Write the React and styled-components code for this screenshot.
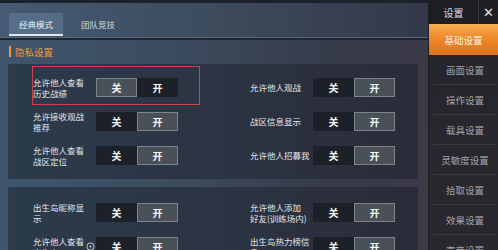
import React from 'react';
import styled, { createGlobalStyle } from 'styled-components';

const GlobalStyle = createGlobalStyle`
  html, body {
    margin: 0;
    padding: 0;
    background: #1e2128;
  }
  body {
    font-family: "Noto Sans CJK SC", "Noto Sans", sans-serif;
  }
`;

const Screen = styled.div`
  width: 498px;
  height: 250px;
  display: flex;
  overflow: hidden;
`;

const Main = styled.div`
  width: 428px;
  flex-shrink: 0;
  display: flex;
  flex-direction: column;
  overflow: hidden;
  background: linear-gradient(90deg, #3f566d 0%, #3b4a5c 45%, #363a49 80%, #3c3a48 100%);
  & > * {
    flex-shrink: 0;
  }
`;

const TopEdge = styled.div`
  height: 3px;
  background: #1c222b;
`;

const TabBar = styled.div`
  height: 34px;
  display: flex;
  align-items: flex-end;
  padding: 0 0 1px 9px;
  gap: 8px;
  box-sizing: border-box;
  background: linear-gradient(90deg, #445b73 0%, #3d4b5d 50%, #33384a 100%);
`;

const Tab = styled.div`
  width: 54px;
  height: 23px;
  display: flex;
  align-items: center;
  justify-content: center;
  box-sizing: border-box;
  font-size: 8.5px;
  color: ${({ active }) => (active ? '#e8edf2' : '#d6dce2')};
  background: ${({ active }) => (active ? 'rgba(120, 150, 180, 0.35)' : 'transparent')};
  border-bottom: 2px solid ${({ active }) => (active ? '#dfe6ee' : 'transparent')};
`;

const Divider = styled.div`
  height: 3px;
  background: linear-gradient(180deg, #56677a 0%, #56677a 40%, #1f2631 40%, #1f2631 100%);
`;

const SectionTitle = styled.div`
  display: flex;
  align-items: center;
  gap: 4px;
  height: 13px;
  margin: 5px 0 6px 9px;
  font-size: 9.5px;
  color: #ec9a36;
  &::before {
    content: '';
    width: 2px;
    height: 11px;
    background: #ec9a36;
  }
`;

const Panels = styled.div`
  display: flex;
  flex-direction: column;
  gap: 8px;
  margin-left: 8px;
  width: 410px;
  & > * {
    flex-shrink: 0;
  }
`;

const Panel = styled.div`
  padding: ${({ top }) => top}px 0 14px 25px;
  display: grid;
  grid-template-columns: 217px 217px;
  row-gap: 15px;
  background: linear-gradient(90deg, #2b3b4c 0%, #2c3443 50%, #2b2b38 100%);
`;

const Cell = styled.div`
  position: relative;
  display: flex;
  align-items: center;
  height: 19px;
`;

const Label = styled.div`
  width: 63px;
  flex-shrink: 0;
  font-size: 8.5px;
  line-height: 10.5px;
  color: #e2e6ea;
  display: flex;
  align-items: center;
`;

const HelpIcon = styled.svg`
  margin-left: 2px;
  flex-shrink: 0;
`;

const Toggle = styled.div`
  display: flex;
  width: 82px;
  height: 19px;
`;

const Half = styled.div`
  flex: 1;
  display: flex;
  align-items: center;
  justify-content: center;
  box-sizing: border-box;
  font-size: 10px;
  font-weight: 700;
  color: #f2f4f6;
  background: ${({ on }) => (on ? '#4a5058' : '#1c2129')};
  border: 1px solid ${({ on }) => (on ? '#7c838c' : '#1c2129')};
`;

const Highlight = styled.div`
  position: absolute;
  left: -1px;
  top: -12px;
  width: 168px;
  height: 39px;
  box-sizing: border-box;
  border: 1.5px solid #c9424e;
  pointer-events: none;
`;

const Sidebar = styled.div`
  width: 70px;
  flex-shrink: 0;
  display: flex;
  flex-direction: column;
  overflow: hidden;
  background: linear-gradient(180deg, #24252b 0%, #2a282f 100%);
  border-left: 1px solid #1d1e22;
  box-sizing: border-box;
  & > * {
    flex-shrink: 0;
  }
`;

const SideHeader = styled.div`
  height: 24px;
  display: flex;
  background: #1c1e22;
`;

const HeaderTitle = styled.div`
  width: 49px;
  display: flex;
  align-items: center;
  justify-content: center;
  font-size: 10px;
  color: #dcdde0;
  border-right: 1px solid #34363b;
`;

const Close = styled.div`
  flex: 1;
  display: flex;
  align-items: center;
  justify-content: center;
  font-size: 13px;
  color: #e4e5e8;
  font-family: "DejaVu Sans", sans-serif;
`;

const SideItem = styled.div`
  height: ${({ active }) => (active ? 31 : 30)}px;
  display: flex;
  align-items: center;
  justify-content: center;
  font-size: 9.5px;
  box-sizing: border-box;
  color: ${({ active }) => (active ? '#fff1e4' : '#a2a2a8')};
  background: ${({ active }) =>
    active ? 'linear-gradient(180deg, #f7ad52 0%, #ee8a2a 45%, #dc7218 100%)' : 'transparent'};
  margin: ${({ active }) => (active ? '0' : '0 1px 0 4px')};
  border-bottom: ${({ active }) => (active ? 'none' : '1px solid #3a3a41')};
`;

const rows1 = [
  [{ label: ['允许他人查看', '历史战绩'], on: 0, mark: true }, { label: ['允许他人观战'], on: 1 }],
  [{ label: ['允许接收观战', '推荐'], on: 1 }, { label: ['战区信息显示'], on: 1 }],
  [{ label: ['允许他人查看', '战区定位'], on: 1 }, { label: ['允许他人招募我'], on: 1 }],
];

const rows2 = [
  [{ label: ['出生岛昵称显', '示'], on: 1 }, { label: ['允许他人添加', '好友(训练场内)'], on: 1 }],
  [{ label: ['允许他人查看', '出生岛'], on: 1, help: true }, { label: ['出生岛热力榜信', '息'], on: 1 }],
];

const menu = ['基础设置', '画面设置', '操作设置', '载具设置', '灵敏度设置', '拾取设置', '效果设置', '声音设置'];

const SwitchCell = ({ item }) => (
  <Cell>
    <Label>
      <span>
        {item.label.map((line, i) => (
          <React.Fragment key={i}>
            {i > 0 && <br />}
            {line}
          </React.Fragment>
        ))}
      </span>
      {item.help && (
        <HelpIcon width="9" height="9" viewBox="0 0 9 9">
          <circle cx="4.5" cy="4.5" r="3.6" fill="none" stroke="#c8ccd2" strokeWidth="1" />
          <circle cx="4.5" cy="4.5" r="1" fill="#c8ccd2" />
        </HelpIcon>
      )}
    </Label>
    <Toggle>
      <Half on={item.on === 0}>关</Half>
      <Half on={item.on === 1}>开</Half>
    </Toggle>
    {item.mark && <Highlight />}
  </Cell>
);

export default function App() {
  return (
    <>
      <GlobalStyle />
      <Screen>
        <Main>
          <TopEdge />
          <TabBar>
            <Tab active>经典模式</Tab>
            <Tab>团队竞技</Tab>
          </TabBar>
          <Divider />
          <SectionTitle>隐私设置</SectionTitle>
          <Panels>
            <Panel top={14}>
              {rows1.flat().map((item, i) => (
                <SwitchCell key={i} item={item} />
              ))}
            </Panel>
            <Panel top={16}>
              {rows2.flat().map((item, i) => (
                <SwitchCell key={i} item={item} />
              ))}
            </Panel>
          </Panels>
        </Main>
        <Sidebar>
          <SideHeader>
            <HeaderTitle>设置</HeaderTitle>
            <Close>✕</Close>
          </SideHeader>
          {menu.map((name, i) => (
            <SideItem key={name} active={i === 0}>
              {name}
            </SideItem>
          ))}
        </Sidebar>
      </Screen>
    </>
  );
}
